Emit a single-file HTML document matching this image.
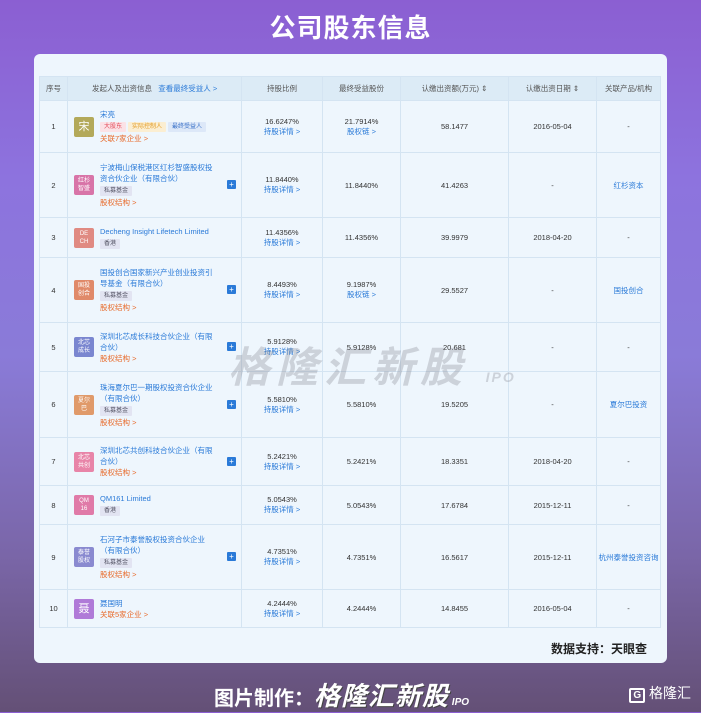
<!DOCTYPE html><html><head><meta charset="utf-8"><style>
*{margin:0;padding:0;box-sizing:border-box}
body{width:701px;height:712px;overflow:hidden;position:relative;font-family:"Liberation Sans","Noto Sans CJK SC",sans-serif;background:linear-gradient(180deg,#8b5fd2 0%,#8d73de 25%,#8a7bd8 50%,#7a66a8 78%,#645076 100%);}
.title{position:absolute;top:8px;left:0;width:701px;text-align:center;color:#fff;font-size:26px;font-weight:bold;letter-spacing:1px}
.card{position:absolute;left:34px;top:54px;width:633px;height:609px;background:#eef6fd;border-radius:6px}
table{position:absolute;left:5px;top:22px;width:621px;border-collapse:collapse;table-layout:fixed;font-size:7.5px;color:#333}
td,th{border:1px solid #d4e4f2;text-align:center;vertical-align:middle;font-weight:normal}
th{background:#dcebf6;height:24px;color:#555}
.blue{color:#2a7ad8}.org{color:#e86a2a}
.nm{position:relative;text-align:left;padding-left:32px;padding-right:22px;line-height:11px}
.av{position:absolute;left:6px;top:50%;margin-top:-10px;width:20px;height:20px;border-radius:2px;color:#fff;font-size:6px;line-height:8px;display:flex;align-items:center;justify-content:center;text-align:center}
.plus{position:absolute;right:5px;top:50%;margin-top:-5px;width:9px;height:9px;background:#2a7ad8;border-radius:1px;color:#fff;font-size:8px;line-height:9px;text-align:center}
.tag{display:inline-block;font-size:6px;padding:0 4px;line-height:10px;margin:1px 2px 1px 0;border-radius:1px}
.t1{background:#fbe2e6;color:#e24a5a}.t2{background:#fbeed2;color:#e29a20}.t3{background:#dde8f8;color:#3a72c8}.t4{background:#e2e4f2;color:#556}
.wm{position:absolute;left:194px;top:280px;font-size:42px;font-weight:bold;font-style:italic;color:rgba(120,120,130,.28);letter-spacing:6px;white-space:nowrap}
.src{position:absolute;right:20px;bottom:6px;font-size:12px;font-weight:bold;color:#222}
.foot{position:absolute;left:214px;top:676px;color:#fff;font-size:20px;font-weight:bold;white-space:nowrap}
.foot i{font-size:26px;letter-spacing:1px;text-shadow:1px 1px 0 #444}
.foot small{font-size:10px;font-style:italic}
.logo{position:absolute;right:10px;top:683px;color:#fff;font-size:14px}
</style></head><body>
<div class="title">公司股东信息</div>
<div class="card">
<table>
<colgroup><col style="width:28px"><col style="width:174px"><col style="width:81px"><col style="width:78px"><col style="width:108px"><col style="width:88px"><col style="width:64px"></colgroup>
<tr><th>序号</th><th style="text-align:left;padding-left:24px">发起人及出资信息 &nbsp; <span class="blue">查看最终受益人 &gt;</span></th><th>持股比例</th><th>最终受益股份</th><th>认缴出资额(万元) ⇕</th><th>认缴出资日期 ⇕</th><th>关联产品/机构</th></tr>
<tr style="height:52px"><td>1</td><td class="nm"><div class="av" style="background:#b3a95a;font-size:11px">宋</div><span class="blue">宋亮</span><br><span class="tag t1">大股东</span><span class="tag t2">实际控制人</span><span class="tag t3">最终受益人</span><br><span class="org">关联7家企业 &gt;</span></td><td>16.6247%<br><span class="blue">持股详情 &gt;</span></td><td>21.7914%<br><span class="blue">股权链 &gt;</span></td><td>58.1477</td><td>2016-05-04</td><td>-</td></tr>
<tr style="height:65px"><td>2</td><td class="nm"><div class="av" style="background:#d874a8">红杉<br>智盛</div><span class="blue">宁波梅山保税港区红杉智盛股权投资合伙企业（有限合伙）</span><br><span class="tag t4">私募基金</span><br><span class="org">股权结构 &gt;</span><div class="plus">+</div></td><td>11.8440%<br><span class="blue">持股详情 &gt;</span></td><td>11.8440%</td><td>41.4263</td><td>-</td><td class="blue">红杉资本</td></tr>
<tr style="height:40px"><td>3</td><td class="nm"><div class="av" style="background:#e08a82">DE<br>CH</div><span class="blue">Decheng Insight Lifetech Limited</span><br><span class="tag t4">香港</span></td><td>11.4356%<br><span class="blue">持股详情 &gt;</span></td><td>11.4356%</td><td>39.9979</td><td>2018-04-20</td><td>-</td></tr>
<tr style="height:65px"><td>4</td><td class="nm"><div class="av" style="background:#e08a6a">国投<br>创合</div><span class="blue">国投创合国家新兴产业创业投资引导基金（有限合伙）</span><br><span class="tag t4">私募基金</span><br><span class="org">股权结构 &gt;</span><div class="plus">+</div></td><td>8.4493%<br><span class="blue">持股详情 &gt;</span></td><td>9.1987%<br><span class="blue">股权链 &gt;</span></td><td>29.5527</td><td>-</td><td class="blue">国投创合</td></tr>
<tr style="height:49px"><td>5</td><td class="nm"><div class="av" style="background:#7a86d0">北芯<br>成长</div><span class="blue">深圳北芯成长科技合伙企业（有限合伙）</span><br><span class="org">股权结构 &gt;</span><div class="plus">+</div></td><td>5.9128%<br><span class="blue">持股详情 &gt;</span></td><td>5.9128%</td><td>20.681</td><td>-</td><td>-</td></tr>
<tr style="height:66px"><td>6</td><td class="nm"><div class="av" style="background:#e09a6a">夏尔<br>巴</div><span class="blue">珠海夏尔巴一期股权投资合伙企业（有限合伙）</span><br><span class="tag t4">私募基金</span><br><span class="org">股权结构 &gt;</span><div class="plus">+</div></td><td>5.5810%<br><span class="blue">持股详情 &gt;</span></td><td>5.5810%</td><td>19.5205</td><td>-</td><td class="blue">夏尔巴投资</td></tr>
<tr style="height:48px"><td>7</td><td class="nm"><div class="av" style="background:#e884a8">北芯<br>共创</div><span class="blue">深圳北芯共创科技合伙企业（有限合伙）</span><br><span class="org">股权结构 &gt;</span><div class="plus">+</div></td><td>5.2421%<br><span class="blue">持股详情 &gt;</span></td><td>5.2421%</td><td>18.3351</td><td>2018-04-20</td><td>-</td></tr>
<tr style="height:39px"><td>8</td><td class="nm"><div class="av" style="background:#e07aa8">QM<br>16</div><span class="blue">QM161 Limited</span><br><span class="tag t4">香港</span></td><td>5.0543%<br><span class="blue">持股详情 &gt;</span></td><td>5.0543%</td><td>17.6784</td><td>2015-12-11</td><td>-</td></tr>
<tr style="height:65px"><td>9</td><td class="nm"><div class="av" style="background:#8a8ad0">泰誉<br>股权</div><span class="blue">石河子市泰誉股权投资合伙企业（有限合伙）</span><br><span class="tag t4">私募基金</span><br><span class="org">股权结构 &gt;</span><div class="plus">+</div></td><td>4.7351%<br><span class="blue">持股详情 &gt;</span></td><td>4.7351%</td><td>16.5617</td><td>2015-12-11</td><td class="blue">杭州泰誉投资咨询</td></tr>
<tr style="height:38px"><td>10</td><td class="nm"><div class="av" style="background:#b07ad8;font-size:11px">聂</div><span class="blue">聂国明</span><br><span class="org">关联5家企业 &gt;</span></td><td>4.2444%<br><span class="blue">持股详情 &gt;</span></td><td>4.2444%</td><td>14.8455</td><td>2016-05-04</td><td>-</td></tr>
</table>
<div class="wm">格隆汇新股 <span style="font-size:14px;letter-spacing:2px">IPO</span></div>
<div class="src">数据支持：天眼查</div>
</div>
<div class="foot">图片制作：<i>格隆汇新股</i><small> IPO</small></div>
<div class="logo"><b style="border:2px solid #fff;border-radius:2px;padding:0 2px;font-size:10px">G</b> 格隆汇</div>
</body></html>
